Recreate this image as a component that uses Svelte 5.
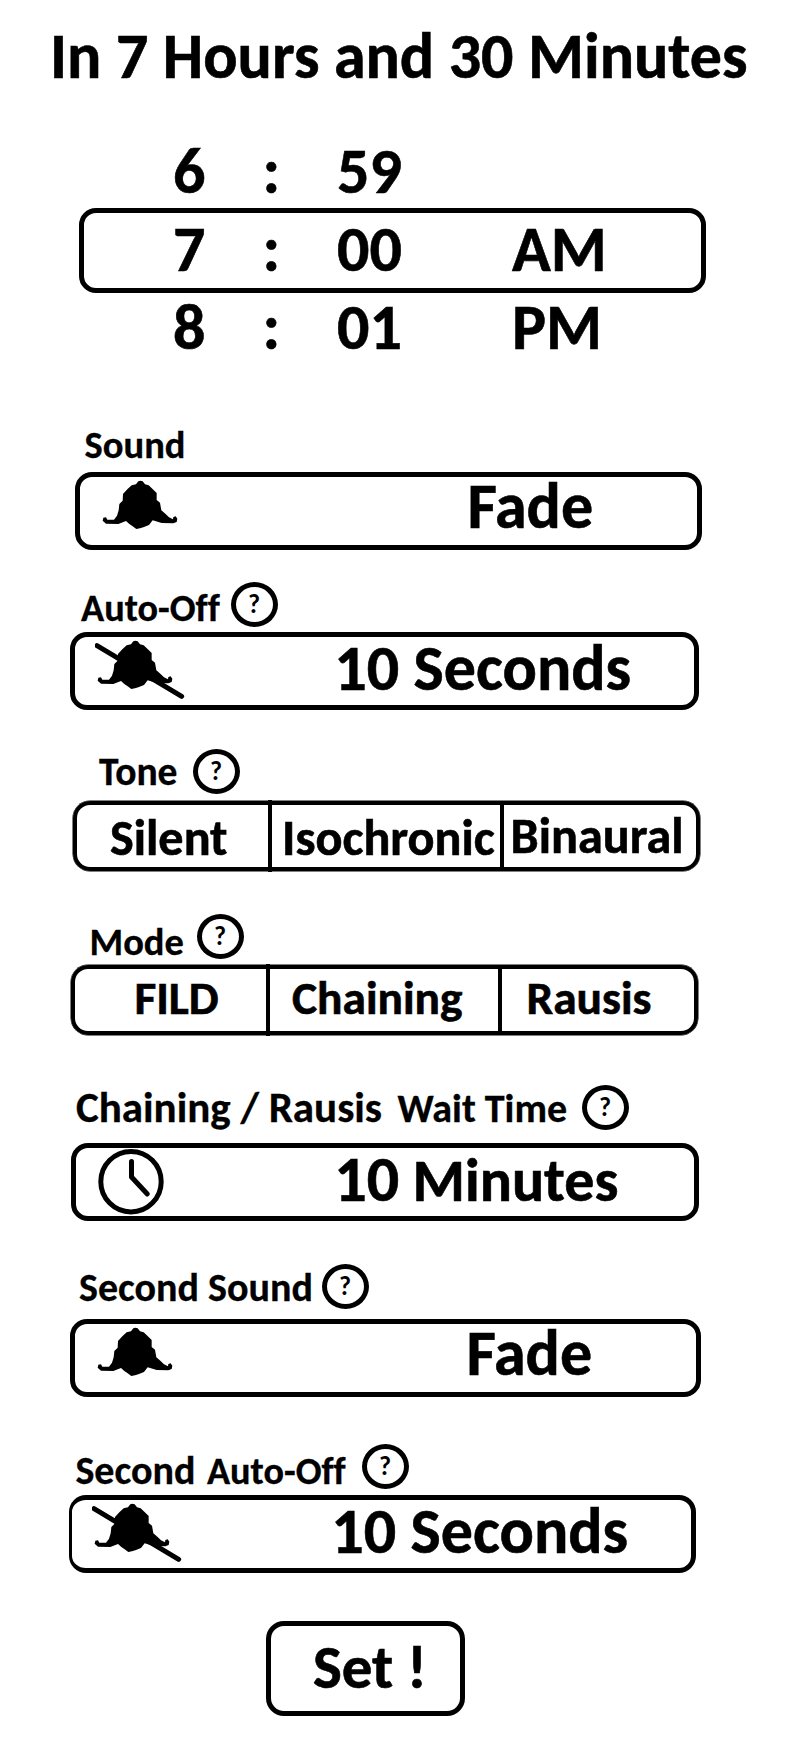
<script>
  const hours = [
    { h: '6', m: '59', p: '' },
    { h: '7', m: '00', p: 'AM', selected: true },
    { h: '8', m: '01', p: 'PM' }
  ];
</script>

{#snippet help()}
  <button class="help" aria-label="Help"><span>?</span></button>
{/snippet}

{#snippet bell(off)}
  <svg class="bell" viewBox="30 30 270 180" width="90" height="60">
    <path d="M145 34 L151 32 L158 34 L165 43 L176 46 L187 56 L200 69 L200 90 L210 98 L214 121 L226 131 L237 142 L249 148 L250 141 L257 139 L262 146 L260 156 L250 160 L215 159 L188 151 L177 165 L160 172 L150 175 L139 177 L128 169 L118 162 L108 153 L85 162 L48 161 L38 152 L40 143 L48 142 L52 149 L72 149 L81 137 L86 121 L88 102 L98 92 L99 72 L112 58 L125 46 L138 43 Z" />
    {#if off}
      <path class="slash" d="M36 47 L290 199" />
    {/if}
  </svg>
{/snippet}

<main>
  <h1>In 7 Hours and 30 Minutes</h1>

  <div class="picker">
    {#each hours as r}
      <div class="time" class:selected={r.selected}>
        <span>{r.h}</span><span>:</span><span>{r.m}</span><span>{r.p}</span>
      </div>
    {/each}
  </div>

  <section class="sound">
    <header><span class="label">Sound</span></header>
    <div class="box">{@render bell(false)}<span class="value">Fade</span></div>
  </section>

  <section class="auto">
    <header><span class="label">Auto-Off</span>{@render help()}</header>
    <div class="box">{@render bell(true)}<span class="value">10 Seconds</span></div>
  </section>

  <section class="tone">
    <header><span class="label">Tone</span>{@render help()}</header>
    <div class="segments">
      <span>Silent</span><span>Isochronic</span><span>Binaural</span>
    </div>
  </section>

  <section class="mode">
    <header><span class="label">Mode</span>{@render help()}</header>
    <div class="segments">
      <span>FILD</span><span>Chaining</span><span>Rausis</span>
    </div>
  </section>

  <section class="wait">
    <header>
      <span class="label large">Chaining / Rausis</span><span class="label">Wait Time</span>{@render help()}
    </header>
    <div class="box">
      <svg class="clock" viewBox="0 0 66 66" width="66" height="66">
        <circle cx="33" cy="32.7" r="30.2" />
        <path d="M33.5 12.5 V28 L49.3 45" />
      </svg>
      <span class="value">10 <span class="unit">Minutes</span></span>
    </div>
  </section>

  <section class="sound2">
    <header><span class="label">Second Sound</span>{@render help()}</header>
    <div class="box">{@render bell(false)}<span class="value">Fade</span></div>
  </section>

  <section class="auto2">
    <header>
      <span class="label">Second</span><span class="label small">Auto-Off</span>{@render help()}
    </header>
    <div class="box">{@render bell(true)}<span class="value">10 Seconds</span></div>
  </section>

  <button class="set">Set !</button>
</main>

<style>
  :global(body) {
    background: #fff;
  }

  main {
    box-sizing: border-box;
    width: 800px;
    height: 1750px;
    overflow: hidden;
    padding-top: 24px;
    background: #fff;
    color: #000;
    font-family: Calibri, Carlito, Lato, sans-serif;
    font-weight: 700;
    font-variant-ligatures: none;
    white-space: nowrap;
    -webkit-text-stroke: 0.6px #000;
  }

  main * {
    box-sizing: border-box;
  }

  h1 {
    margin: 0 0 42px 50px;
    font-size: 64px;
    line-height: 64px;
    font-weight: 700;
  }

  .picker {
    width: 627px;
    margin-left: 79px;
    font-size: 64px;
  }

  .time {
    display: grid;
    grid-template-columns: 89.5px 74.5px 175px auto;
    height: 78px;
    padding-left: 94px;
    line-height: 82px;
  }

  .time.selected {
    height: 85px;
    padding-left: 89px;
    border: 5px solid #000;
    border-radius: 17px;
    line-height: 73px;
  }

  .time:last-child {
    height: 71px;
    line-height: 68px;
  }

  section header {
    display: grid;
    align-items: start;
  }

  .label {
    font-size: 38.5px;
    line-height: 42px;
    -webkit-text-stroke-width: 0.3px;
  }

  .help {
    width: 47px;
    height: 45px;
    padding: 0;
    border: 5px solid #000;
    border-radius: 50%;
    background: none;
    color: #000;
    font: inherit;
    font-size: 26px;
    line-height: 35px;
    text-align: center;
    -webkit-text-stroke-width: 0;
  }

  .help span {
    display: block;
    margin-left: -1px;
  }

  .box {
    display: flex;
    align-items: flex-start;
    width: 629px;
    height: 78px;
    border: 5px solid #000;
    border-radius: 17px;
  }

  .bell {
    flex: none;
    margin: 3px 0 0 20px;
    fill: #000;
  }

  .slash {
    stroke: #000;
    stroke-width: 15;
    stroke-linecap: round;
  }

  .clock {
    flex: none;
    margin: 1px 0 0 22px;
    fill: none;
    stroke: #000;
    stroke-width: 5;
    stroke-linecap: round;
    stroke-linejoin: round;
  }

  .value {
    font-size: 64px;
    line-height: 63px;
  }

  .segments {
    display: grid;
    grid-template-columns: 191px 232px 1fr;
    grid-template-rows: 100%;
    width: 627px;
    height: 70px;
    border: 4px solid #000;
    border-radius: 17px;
    box-shadow: 0 0 0 0.5px #000;
  }

  .segments span + span {
    border-left: 4px solid #000;
  }

  .segments span:nth-child(2) {
    position: relative;
  }

  .segments span:nth-child(2)::before {
    content: '';
    position: absolute;
    top: -5px;
    bottom: -5px;
    left: -4px;
    width: 4px;
    background: #000;
  }

  .sound {
    margin-top: 60px;
  }
  .sound header {
    height: 48px;
    margin-left: 84.6px;
  }
  .sound .box {
    width: 627px;
    margin-left: 75px;
  }
  .sound .value {
    margin-left: 277.4px;
    line-height: 59px;
  }

  .auto {
    margin-top: 32px;
  }
  .auto header {
    grid-template-columns: 150px 47px;
    height: 50px;
    margin-left: 81px;
  }
  .auto .label {
    margin-top: 5px;
    font-size: 38.2px;
  }
  .auto .box {
    margin-left: 70px;
  }
  .auto .value {
    margin-left: 149.2px;
  }

  .tone {
    margin-top: 39px;
  }
  .tone header {
    grid-template-columns: 94px 47px;
    height: 52px;
    margin-left: 99px;
  }
  .tone .label {
    margin-top: 2px;
    font-size: 39.5px;
  }
  .tone .segments {
    margin-left: 73px;
    font-size: 50.2px;
    line-height: 66px;
  }
  .tone .segments span:nth-child(1) {
    padding-left: 33px;
  }
  .tone .segments span:nth-child(2) {
    padding-left: 10px;
  }
  .tone .segments span:nth-child(3) {
    padding-left: 6.6px;
    line-height: 62px;
  }

  .mode {
    margin-top: 43px;
  }
  .mode header {
    grid-template-columns: 107.5px 47px;
    height: 51px;
    margin-left: 89.5px;
  }
  .mode .label {
    margin-top: 7px;
  }
  .mode .segments {
    margin-left: 71px;
    font-size: 47.4px;
    line-height: 59px;
  }
  .mode .segments span:nth-child(1) {
    padding-left: 59.4px;
  }
  .mode .segments span:nth-child(2) {
    padding-left: 22px;
  }
  .mode .segments span:nth-child(3) {
    padding-left: 24.5px;
  }

  .wait {
    margin-top: 50px;
  }
  .wait header {
    grid-template-columns: 321.5px 184.5px 47px;
    height: 58px;
    margin-left: 76px;
  }
  .wait .label {
    margin-top: 3px;
    font-size: 40px;
  }
  .wait .label.large {
    margin-top: 2px;
    font-size: 43px;
  }
  .wait .box {
    width: 628px;
    margin-left: 71px;
  }
  .wait .value {
    margin-left: 170.2px;
  }
  .wait .unit {
    font-size: 60px;
    margin-left: -1px;
  }

  .sound2 {
    margin-top: 43px;
  }
  .sound2 header {
    grid-template-columns: 243px 47px;
    height: 55px;
    margin-left: 79px;
  }
  .sound2 .label {
    margin-top: 3px;
    font-size: 40px;
  }
  .sound2 .box {
    width: 631px;
    margin-left: 70px;
  }
  .sound2 .value {
    margin-left: 281.4px;
    line-height: 59px;
  }

  .auto2 {
    margin-top: 47px;
  }
  .auto2 header {
    grid-template-columns: 131.6px 155px 47px;
    height: 51px;
    margin-left: 75.4px;
  }
  .auto2 .label {
    margin-top: 6px;
    font-size: 40px;
  }
  .auto2 .label.small {
    margin-top: 6px;
    font-size: 38.2px;
  }
  .auto2 .box {
    width: 627px;
    margin-left: 69px;
    border-left-width: 3px;
  }
  .auto2 .value {
    margin-left: 149.2px;
  }

  .set {
    display: block;
    width: 199px;
    height: 95px;
    margin: 48px 0 0 266px;
    padding: 0 0 3px 42px;
    border: 5px solid #000;
    border-radius: 18px;
    background: none;
    color: #000;
    font: inherit;
    font-size: 61px;
    line-height: 79px;
    text-align: left;
  }
</style>
